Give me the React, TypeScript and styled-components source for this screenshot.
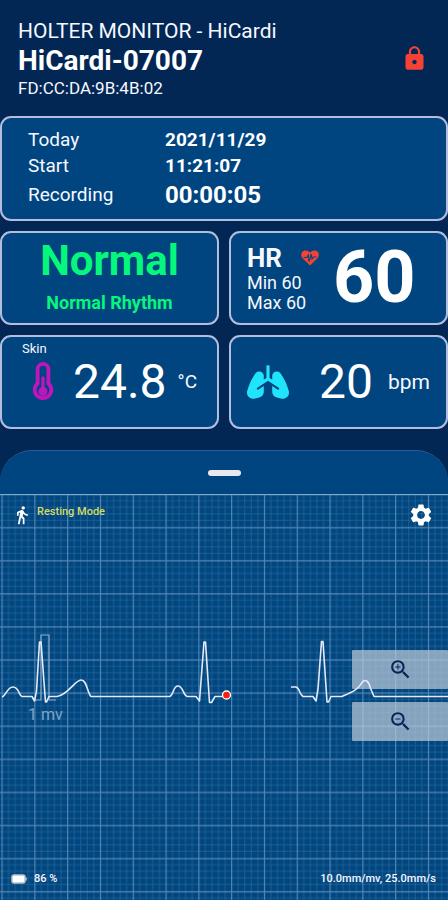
import React from "react";
import styled, { createGlobalStyle } from "styled-components";
import { MdDirectionsWalk, MdLock, MdSettings, MdZoomIn, MdZoomOut } from "react-icons/md";
import { FaLungs } from "react-icons/fa";

const GlobalStyle = createGlobalStyle`
  *, *::before, *::after { box-sizing: border-box; }
  body { margin: 0; background: #022754; }
`;

const Page = styled.div`
  display: flex;
  flex-direction: column;
  min-height: 100vh;
  background: #022754;
  color: #f6f8ff;
  font-family: Roboto, "Liberation Sans", sans-serif;
`;

const Header = styled.header`
  display: flex;
  align-items: center;
  justify-content: space-between;
  height: 116px;
  padding: 0 20px 0 18px;
`;

const Product = styled.div`
  font-size: 21px;
  line-height: 28px;
`;

const DeviceName = styled.h1`
  margin: 0;
  font-size: 28px;
  font-weight: 700;
  line-height: 32px;
  color: #ffffff;
`;

const Address = styled.div`
  font-size: 17px;
  line-height: 22px;
`;

const IconButton = styled.button<{ $color: string }>`
  display: flex;
  padding: 0;
  border: 0;
  background: none;
  color: ${(p) => p.$color};
  cursor: pointer;
`;

const Cards = styled.main`
  display: grid;
  grid-template-columns: 1fr 1fr;
  gap: 10px;
`;

const Card = styled.section<{ $wide?: boolean; $height: number }>`
  position: relative;
  display: flex;
  align-items: center;
  min-height: ${(p) => p.$height}px;
  grid-column: ${(p) => (p.$wide ? "1 / -1" : "auto")};
  border: 2px solid #b3bddd;
  border-radius: 11px;
  background: #00457f;
`;

const Session = styled.dl`
  display: grid;
  grid-template-columns: 137px auto;
  grid-template-rows: 26px 26px 32px;
  align-items: center;
  margin: 0;
  padding-left: 26px;
`;

const Term = styled.dt`
  font-size: 19px;
`;

const Detail = styled.dd<{ $large?: boolean }>`
  margin: 0;
  font-size: ${(p) => (p.$large ? 24 : 19)}px;
  font-weight: 700;
  color: #ffffff;
`;

const Rhythm = styled.div`
  flex: 1;
  padding-bottom: 2px;
  color: #05f77c;
  font-weight: 700;
  text-align: center;
`;

const RhythmState = styled.div`
  font-size: 42px;
  line-height: 52px;
`;

const RhythmName = styled.div`
  font-size: 18px;
  line-height: 32px;
`;

const HeartSummary = styled.div`
  width: 84px;
  padding-left: 16px;
  box-sizing: content-box;
`;

const HeartTitle = styled.div`
  display: flex;
  align-items: center;
  justify-content: space-between;
  padding-right: 12px;
  font-size: 26px;
  font-weight: 700;
  line-height: 30px;
`;

const Range = styled.div`
  font-size: 18px;
  line-height: 20px;
`;

const Rate = styled.div`
  margin-left: 2px;
  font-size: 72px;
  font-weight: 700;
  line-height: 80px;
  color: #ffffff;
`;

const Corner = styled.div`
  position: absolute;
  top: 4px;
  left: 20px;
  font-size: 13px;
  line-height: 16px;
`;

const Vital = styled.div<{ $inset: number; $end: number }>`
  flex: 1;
  display: flex;
  align-items: center;
  padding: 0 ${(p) => p.$end}px 0 ${(p) => p.$inset}px;
`;

const VitalValue = styled.div`
  margin-left: auto;
  font-size: 48px;
  line-height: 56px;
  color: #ffffff;
`;

const Unit = styled.div<{ $gap: number; $small?: boolean }>`
  margin-left: ${(p) => p.$gap}px;
  font-size: ${(p) => (p.$small ? 19 : 21)}px;
  line-height: 28px;
`;

const Sheet = styled.section`
  flex: 1;
  display: flex;
  flex-direction: column;
  margin-top: 21px;
  overflow: hidden;
  border-top: 1px solid #2a5f90;
  border-radius: 32px 32px 0 0;
  background: #00457f;
`;

const HandleBar = styled.div`
  display: flex;
  align-items: center;
  justify-content: center;
  height: 43px;
`;

const Handle = styled.button`
  width: 33px;
  height: 6px;
  padding: 0;
  border: 0;
  border-radius: 3px;
  background: #e7e9ee;
  cursor: pointer;
`;

const Monitor = styled.div`
  position: relative;
  flex: 1;
  display: flex;
  flex-direction: column;
  justify-content: space-between;
  min-height: 405px;
`;

const Layer = styled.svg`
  position: absolute;
  inset: 0;
  width: 100%;
  height: 100%;
  pointer-events: none;
`;

const MonitorRow = styled.div<{ $top?: boolean }>`
  position: relative;
  display: flex;
  align-items: center;
  justify-content: space-between;
  padding: ${(p) => (p.$top ? "8px 14px 0 12px" : "0 12px 13px 11px")};
`;

const Status = styled.div<{ $gap: number }>`
  display: flex;
  align-items: center;
  gap: ${(p) => p.$gap}px;
  font-size: 11px;
  font-weight: 500;
  line-height: 16px;
`;

const Mode = styled.span`
  padding-bottom: 6px;
  color: #d5dc62;
`;

const ZoomControls = styled.div`
  position: absolute;
  top: 156px;
  right: 0;
  display: flex;
  flex-direction: column;
  gap: 13px;
  width: 96px;
`;

const ZoomButton = styled.button`
  display: flex;
  align-items: center;
  justify-content: center;
  height: 39px;
  padding: 0;
  border: 0;
  border-radius: 1px;
  background: rgba(190, 203, 216, 0.7);
  color: #0b2458;
  cursor: pointer;
`;

function HeartIcon() {
  return (
    <svg width="18" height="16" viewBox="0 0 18 16" aria-hidden="true">
      <path
        fill="#f44336"
        d="M9 15.6 1.5 8.2C-.3 6.200-.1 3.300 1.300 1.800 3.300-.2 6.600-.1 9 2.500 11.400-.1 14.700-.2 16.700 1.800 18.100 3.300 18.300 6.200 16.500 8.200Z"
      />
      <path fill="none" stroke="#00457f" strokeWidth="1.100" d="M2.500 7.500h3.300L7.300 5 8 11.500 10.300 4 11 9l1.500-2h3" />
    </svg>
  );
}

function ThermometerIcon() {
  return (
    <svg width="22" height="40" viewBox="0 0 22 40" fill="none" stroke="#c014bd" aria-hidden="true">
      <path strokeWidth="3.800" d="M5.600 21.500V7.300a5.400 5.400 0 0 1 10.800 0v14.200a8.300 8.300 0 1 1-10.800 0Z" />
      <path strokeWidth="3.400" strokeLinecap="round" d="M11 16v12" />
      <circle cx="11" cy="29.500" r="4.500" fill="#c014bd" stroke="none" />
    </svg>
  );
}

function BatteryIcon() {
  return (
    <svg width="16" height="10" viewBox="0 0 16 10" aria-hidden="true">
      <rect x="1" y="1" width="13" height="8" rx="2" fill="#ffffff" stroke="#b8c2d0" strokeWidth="1.500" />
      <path d="M15 3.500v3" stroke="#b8c2d0" strokeWidth="1.500" />
    </svg>
  );
}

function Grid() {
  const minor = [1, 2, 3, 4].map((n) => n * 6.56);
  return (
    <Layer aria-hidden="true">
      <defs>
        <pattern id="paper" x="1.500" y="-.3" width="32.800" height="33.100" patternUnits="userSpaceOnUse">
          {minor.map((n) => (
            <path key={n} d={`M${n + 0.5} 0V33.100M0 ${n + 0.5}H32.800`} stroke="#3377a6" strokeOpacity=".4" strokeWidth="1.200" />
          ))}
          <path d="M.5 0V33.100M0 .8H32.800" stroke="#6d9dc6" strokeOpacity=".75" strokeWidth="1.300" />
        </pattern>
      </defs>
      <rect width="100%" height="100%" fill="#024680" />
      <rect width="100%" height="100%" fill="url(#paper)" />
      <path d="M0 .5H4000" stroke="#81a9cc" />
    </Layer>
  );
}

function Trace() {
  return (
    <Layer role="img" aria-label="ECG trace">
      <path fill="none" stroke="#8fb0d0" strokeWidth="1.200" d="M34 206h7V141h8v65h7" />
      <text x="28" y="226" fill="#7fa4c8" fontSize="16">
        1 mv
      </text>
      <g fill="none" stroke="#e3eaf8" strokeWidth="1.600" strokeLinejoin="round">
        <path d="M2 203C6 202 7 193 13 193S19 202 22 202.500H32L34.500 207 36.500 197 39.500 148H41L45.500 208H46.500L49 202.500H57C68 201 75 186 81 186S87 198 91 202.500H170C174 200 173 192 178 192S183 201 187 202.500H196L199.500 207 204 148H205.500L209.500 208.500H211.500L215 202.500H226" />
        <path d="M291 193H296C300 194 299 200 303 202.500H313L316 207 318 195 321.500 147.500H323L327 208H328.500L331 202.500H342C350 199 358 196 361 190 365 183 369 188 370 193L374 202.500H448" />
      </g>
      <circle cx="226.500" cy="201" r="4" fill="#f51d10" stroke="#ffffff" strokeWidth="1.300" />
    </Layer>
  );
}

export default function App() {
  return (
    <Page>
      <GlobalStyle />
      <Header>
        <div>
          <Product>HOLTER MONITOR - HiCardi</Product>
          <DeviceName>HiCardi-07007</DeviceName>
          <Address>FD:CC:DA:9B:4B:02</Address>
        </div>
        <IconButton $color="#f44336" aria-label="Lock">
          <MdLock size={27} />
        </IconButton>
      </Header>
      <Cards>
        <Card $wide $height={105}>
          <Session>
            <Term>Today</Term>
            <Detail>2021/11/29</Detail>
            <Term>Start</Term>
            <Detail>11:21:07</Detail>
            <Term>Recording</Term>
            <Detail $large>00:00:05</Detail>
          </Session>
        </Card>
        <Card $height={94}>
          <Rhythm>
            <RhythmState>Normal</RhythmState>
            <RhythmName>Normal Rhythm</RhythmName>
          </Rhythm>
        </Card>
        <Card $height={94}>
          <HeartSummary>
            <HeartTitle>
              HR <HeartIcon />
            </HeartTitle>
            <Range>Min 60</Range>
            <Range>Max 60</Range>
          </HeartSummary>
          <Rate>60</Rate>
        </Card>
        <Card $height={94}>
          <Corner>Skin</Corner>
          <Vital $inset={30} $end={20}>
            <ThermometerIcon />
            <VitalValue>24.8</VitalValue>
            <Unit $gap={11} $small>
              °C
            </Unit>
          </Vital>
        </Card>
        <Card $height={94}>
          <Vital $inset={16} $end={16}>
            <FaLungs size={42} color="#20e4fb" />
            <VitalValue>20</VitalValue>
            <Unit $gap={15}>bpm</Unit>
          </Vital>
        </Card>
      </Cards>
      <Sheet>
        <HandleBar>
          <Handle aria-label="Resize panel" />
        </HandleBar>
        <Monitor>
          <Grid />
          <MonitorRow $top>
            <Status $gap={5}>
              <MdDirectionsWalk size={20} color="#ffffff" />
              <Mode>Resting Mode</Mode>
            </Status>
            <IconButton $color="#ffffff" aria-label="Settings">
              <MdSettings size={26} />
            </IconButton>
          </MonitorRow>
          <ZoomControls>
            <ZoomButton aria-label="Zoom in">
              <MdZoomIn size={25} />
            </ZoomButton>
            <ZoomButton aria-label="Zoom out">
              <MdZoomOut size={25} />
            </ZoomButton>
          </ZoomControls>
          <Trace />
          <MonitorRow>
            <Status $gap={7}>
              <BatteryIcon />
              86 %
            </Status>
            <Status $gap={0}>10.0mm/mv, 25.0mm/s</Status>
          </MonitorRow>
        </Monitor>
      </Sheet>
    </Page>
  );
}
